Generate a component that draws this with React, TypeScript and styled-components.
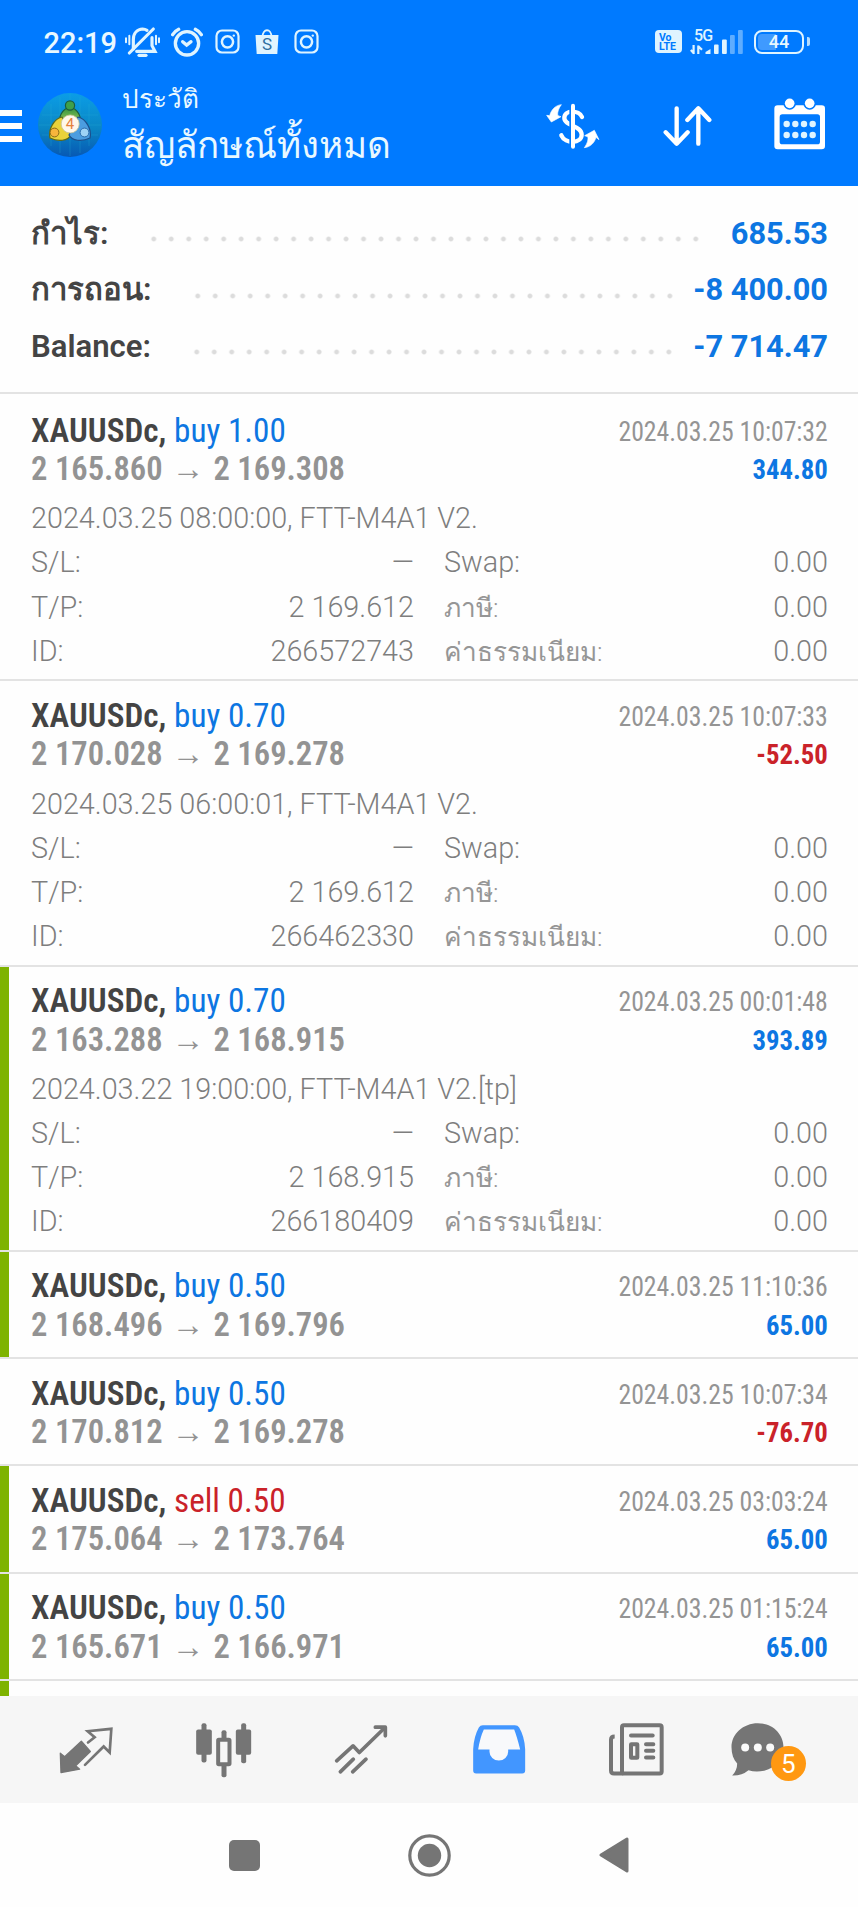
import React from 'react';
import styled, { createGlobalStyle } from 'styled-components';

const BLUE = '#007aff';
const VALUE_BLUE = '#0d76e2';
const VALUE_RED = '#ca2229';
const ICON_GREY = '#757575';
const ICE = '#dff4ff';

const GlobalStyle = createGlobalStyle`
  html, body { margin: 0; padding: 0; }
  body {
    background: #fefefe;
    font-family: Roboto, "Noto Sans", sans-serif;
    -webkit-font-smoothing: antialiased;
  }
  *, *::before, *::after { box-sizing: border-box; }
`;

const Screen = styled.div`
  width: 858px;
  height: 1907px;
  display: flex;
  flex-direction: column;
  overflow: hidden;
  background: #fefefe;
`;

/* ---------- header ---------- */

const Header = styled.header`
  flex: none;
  height: 185.5px;
  background: ${BLUE};
  color: #e9f8ff;
`;

const StatusBar = styled.div`
  height: 83px;
  padding: 0 54px 0 43.5px;
  display: flex;
  align-items: center;
`;

const Clock = styled.span`
  width: 80px;
  font-size: 29px;
  font-weight: 500;
  line-height: 34px;
  padding-top: 2px;
`;

const StatusGroup = styled.div<{ $push?: boolean; $gap: number }>`
  display: flex;
  align-items: center;
  gap: ${p => p.$gap}px;
  margin-left: ${p => (p.$push ? 'auto' : '0')};
`;

const AppIcons = styled.div`
  display: flex;
  align-items: center;
  gap: 15px;
  margin-left: 1.5px;
`;

const VoLte = styled.span`
  width: 27px;
  height: 23px;
  border-radius: 4px;
  background: ${ICE};
  color: ${BLUE};
  font-size: 10.5px;
  font-weight: 700;
  line-height: 9.5px;
  padding: 2.5px 0 0 4px;
`;

const Cell = styled.div`
  display: flex;
  flex-direction: column;
  width: 56px;
`;

const CellLabel = styled.span`
  font-size: 16px;
  font-weight: 500;
  line-height: 16px;
  height: 13px;
  padding-left: 4px;
  letter-spacing: -0.8px;
  color: ${ICE};
`;

const Battery = styled.div`
  position: relative;
  width: 50px;
  height: 24px;
  border: 2.5px solid ${ICE};
  border-radius: 8px;
  display: flex;
  align-items: center;
  justify-content: center;
  font-size: 18px;
  font-weight: 500;
  line-height: 18px;
  background: linear-gradient(90deg, #3f9aff 0 42%, transparent 42%) content-box;
  padding: 2px;

  &::after {
    content: '';
    position: absolute;
    right: -8px;
    top: 5.5px;
    width: 3px;
    height: 9px;
    border-radius: 0 2px 2px 0;
    background: #b4dcff;
  }
`;

const AppBar = styled.div`
  height: 102.5px;
  padding: 0 32px 17px 0;
  display: flex;
  align-items: center;
`;

const MenuBars = styled.div`
  width: 22px;
  height: 32px;
  display: flex;
  flex-direction: column;
  justify-content: space-between;
`;

const MenuBar = styled.span`
  height: 6px;
  background: #fff;
`;

const Logo = styled.svg`
  width: 66px;
  height: 66px;
  margin: -2px 0 0 15px;
`;

const Titles = styled.div`
  margin-left: 18.5px;
  display: flex;
  flex-direction: column;
`;

const Caption = styled.span`
  font-size: 26.1px;
  line-height: 36.5px;
  height: 39px;
  white-space: nowrap;
`;

const Title = styled.span`
  font-size: 36.7px;
  line-height: 51px;
  height: 50px;
  white-space: nowrap;
`;

const Actions = styled.div`
  margin-left: auto;
  display: flex;
  align-items: center;
  gap: 62.5px;
`;

/* ---------- summary ---------- */

const Summary = styled.section`
  flex: none;
  height: 208.5px;
  padding: 20.5px 30px 0 31px;
  border-bottom: 2px solid #e3e3e3;
`;

const SummaryRow = styled.div`
  height: 56.3px;
  display: flex;
  align-items: center;
  font-weight: 700;
  line-height: 56.3px;
  white-space: nowrap;
`;

const SummaryLabel = styled.span`
  color: #444;
  font-size: 31.1px;
  font-weight: 600;
`;

const Leader = styled.span<{ $count: number; $gap: number }>`
  width: ${p => p.$count * 17.49}px;
  height: 8px;
  margin: 10.5px ${p => p.$gap}px 0 auto;
  background: radial-gradient(circle, #dcdcdc 0 1.8px, transparent 3px) 0 0 / 17.49px 8px repeat-x;
`;

const SummaryValue = styled.span`
  color: ${VALUE_BLUE};
  font-size: 30.8px;
`;

/* ---------- deals ---------- */

const Deals = styled.section`
  flex: 1;
  padding-top: 2px;
  overflow: hidden;
`;

const Deal = styled.article<{ $open: boolean; $marked: boolean }>`
  height: ${p => (p.$open ? 283.3 : 105.25)}px;
  padding: 14.5px 30px 0 22px;
  border-left: 9px solid ${p => (p.$marked ? '#7eb300' : 'transparent')};
`;

const Divider = styled.div`
  height: 2px;
  background: #e3e3e3;
`;

const NextDealEdge = styled.div`
  width: 9px;
  height: 20px;
  background: #7eb300;
`;

const DealLine = styled.div`
  height: 38.5px;
  display: flex;
  justify-content: space-between;
  line-height: 38.5px;
  white-space: pre;
`;

const Narrow = styled.span<{ $scale: number; $size: number; $weight: number; $color: string; $end?: boolean }>`
  display: inline-block;
  font-family: "Roboto Condensed", Roboto, "Noto Sans", sans-serif;
  font-size: ${p => p.$size}px;
  font-weight: ${p => p.$weight};
  color: ${p => p.$color};
  transform: scaleX(${p => p.$scale});
  transform-origin: ${p => (p.$end ? '100%' : '0')} 50%;
  ${p => (p.$end ? 'padding-top: 2px;' : '')}
`;

const Side = styled.span<{ $sell: boolean }>`
  font-weight: 400;
  color: ${p => (p.$sell ? VALUE_RED : VALUE_BLUE)};
`;

const Arrow = styled.span`
  display: inline-block;
  width: 53px;
  text-align: center;
  font-weight: 400;
`;

const Detail = styled.div`
  color: #7e7e7e;
  font-size: 28.75px;
  font-weight: 300;
  line-height: 44.1px;
  white-space: nowrap;
`;

const Comment = styled.div`
  height: 44.1px;
  margin-top: 8.9px;
`;

const Fields = styled.div`
  display: grid;
  grid-template-columns: 383px 384px;
  grid-auto-rows: 44.1px;
  column-gap: 30px;
`;

const Field = styled.div`
  display: flex;
  justify-content: space-between;
  align-items: baseline;
`;

const FieldLabel = styled.span<{ $thai: boolean }>`
  font-size: ${p => (p.$thai ? '26.2px' : 'inherit')};
  color: ${p => (p.$thai ? '#969696' : 'inherit')};
`;

/* ---------- bottom bars ---------- */

const TabBar = styled.nav`
  flex: none;
  height: 107px;
  padding: 0 15.75px 0 17.25px;
  display: flex;
  align-items: center;
  background: #f6f6f6;
`;

const Tab = styled.div`
  position: relative;
  flex: 1;
  display: flex;
  justify-content: center;
`;

const TabSvg = styled.svg`
  width: 60px;
  height: 60px;
  overflow: visible;
`;

const Badge = styled.span`
  position: absolute;
  left: 66px;
  top: 26.5px;
  width: 35px;
  height: 35px;
  border-radius: 50%;
  background: #ff9811;
  color: #fff;
  font-size: 26px;
  line-height: 36px;
  text-align: center;
`;

const SystemNav = styled.nav`
  flex: none;
  height: 104px;
  display: flex;
  justify-content: center;
  align-items: center;
`;

const NavCell = styled.div`
  width: 185px;
  display: flex;
  justify-content: center;
`;

/* ---------- drawings ---------- */

const BellOff = () => (
  <svg width="36" height="34" viewBox="372 74 108 102" fill="none" stroke={ICE} strokeWidth="9.5" strokeLinecap="round">
    <path d="M400 146 V118 C400 98 412 87 428 86 C434 86 438 88 441 90" />
    <path d="M456 112 V136 L465 153 H410" />
    <path d="M460 86 L388 158" />
    <path d="M417 165 H438" />
    <path d="M378 114 V126 M388 106 V132 M468 106 V132 M477 114 V126" strokeWidth="6" />
  </svg>
);

const Alarm = () => (
  <svg width="32" height="30" viewBox="514 78 96 90" fill="none" stroke={ICE} strokeWidth="10" strokeLinecap="round">
    <circle cx="562" cy="127" r="35" />
    <path d="M519 101 Q526 90 537 85 M605 101 Q598 90 587 85" />
    <path d="M549 122 L561 132 L574 122" />
  </svg>
);

const Insta = () => (
  <svg width="25" height="25" viewBox="0 0 25 25" fill="none" stroke={ICE} strokeWidth="2.2">
    <rect x="1.5" y="1.5" width="22" height="22" rx="5.5" />
    <circle cx="12.5" cy="12.8" r="5.6" strokeWidth="2.5" />
    <circle cx="18.8" cy="6.6" r="1.2" fill={ICE} stroke="none" />
  </svg>
);

const ShopBag = () => (
  <svg width="24" height="27" viewBox="0 0 24 27">
    <path d="M7.5 9 C7.5 0 16.5 0 16.5 9" fill="none" stroke={ICE} strokeWidth="1.8" />
    <path d="M0.5 7 H23.5 L22.3 26 H1.7 Z" fill={ICE} />
    <text x="12" y="22.3" fontFamily="Roboto" fontSize="17" textAnchor="middle" fill="#2f6f9f">S</text>
  </svg>
);

const SignalBars = () => (
  <svg width="54" height="26" viewBox="0 0 54 26">
    <g fill="none" stroke={ICE} strokeWidth="2.2">
      <path d="M3.6 16 V25 M0.8 21 L4 24.6" />
      <path d="M8.3 25 V16.6 M8 17 L12 20.8" />
    </g>
    <g fill={ICE}>
      <path d="M15.5 25 V23 L20.5 20 V25 Z" />
      <rect x="24" y="15.5" width="4.6" height="9.5" rx="1" />
      <rect x="32" y="10.5" width="4.8" height="14.5" rx="1" />
      <g opacity=".42">
        <rect x="40" y="6" width="4.8" height="19" rx="1" />
        <rect x="48" y="1" width="4.8" height="24" rx="1" />
      </g>
    </g>
  </svg>
);

const SignalWrap = styled.div`
  margin-top: -12px;
  height: 26px;
`;

const LogoMark = () => (
  <Logo viewBox="0 0 66 66">
    <defs>
      <linearGradient id="disc" x1="0" y1="0" x2="0" y2="1">
        <stop offset="0" stopColor="#0b9de6" />
        <stop offset=".55" stopColor="#0a86c4" />
        <stop offset="1" stopColor="#0758b4" />
      </linearGradient>
      <linearGradient id="leaf" x1="0" y1="0" x2="0" y2="1">
        <stop offset="0" stopColor="#2f8f3f" />
        <stop offset="1" stopColor="#a7d35c" />
      </linearGradient>
    </defs>
    <circle cx="33" cy="33" r="32" fill="url(#disc)" />
    <path d="M14 12 V54 M23 5 V61 M33 2 V64 M43 5 V61 M52 12 V54 M5 23 H61 M2 33 H64 M5 43 H61" stroke="#28b5d8" strokeWidth=".6" opacity=".45" />
    <g strokeLinejoin="round">
      <path d="M33 15 C25 17 21 25 23 33 L43 33 C45 25 41 17 33 15Z" fill="url(#leaf)" stroke="#1d5c3c" strokeWidth="1.2" />
      <circle cx="33" cy="13.5" r="4.6" fill="#3fa04a" stroke="#1d5c3c" strokeWidth="1.2" />
      <path d="M25 25 C17 27 11 37 13 46 C21 50 31 49 34 43 Z" fill="#ead23a" stroke="#5f6a16" strokeWidth="1.2" />
      <circle cx="17.5" cy="40.5" r="4.4" fill="#f7b53c" stroke="#8a6a16" strokeWidth="1" />
      <path d="M41 25 C49 27 55 37 53 46 C45 50 35 49 32 43 Z" fill="#4b9de0" stroke="#1c4f8c" strokeWidth="1.2" />
      <circle cx="47.5" cy="40.5" r="4.4" fill="#9ed3f6" stroke="#2b6cab" strokeWidth="1" />
    </g>
    <circle cx="33.2" cy="32" r="9" fill="#fff7ea" stroke="#c9c79a" strokeWidth=".8" />
    <text x="33" y="37.4" fontFamily="Roboto" fontSize="15" textAnchor="middle" fill="#e5813c">4</text>
  </Logo>
);

const DollarCycle = () => (
  <svg width="54" height="46" viewBox="356 305 162 138" fill="none">
    <path d="M464 347 C456 326 411 324 411 350 C411 374 463 372 463 400 C463 426 414 430 402 402" stroke="#fff" strokeWidth="13" strokeLinecap="round" />
    <path d="M430 308 V440" stroke={BLUE} strokeWidth="8" />
    <path d="M437 313 V436" stroke="#fff" strokeWidth="12" strokeLinecap="round" />
    <path d="M402 310 C393 322 389 336 392 343 L401 346 L372 362 L358 342 L367 343 C372 325 384 312 402 310Z" fill="#fff" stroke="#fff" strokeWidth="2" />
    <path d="M471 439 C480 427 484 413 481 406 L472 403 L501 387 L515 415 L506 408 C501 425 489 437 471 439Z" fill="#fff" stroke="#fff" strokeWidth="2" />
  </svg>
);

const SortArrows = () => (
  <svg width="49" height="42" viewBox="704 311 147 126" fill="none" stroke="#fff" strokeWidth="13" strokeLinecap="round" strokeLinejoin="round">
    <path d="M745 321 V426 M712 393 L745 427 L778 393" />
    <path d="M810 427 V324 M777 356 L810 321 L843 356" />
  </svg>
);

const CalendarSvg = styled.svg`
  margin-top: -3px;
`;

const Calendar = () => (
  <CalendarSvg width="52" height="52" viewBox="1038 293 156 156">
    <rect x="1039" y="315" width="152" height="132" rx="10" fill="#fff" />
    <rect x="1055" y="342" width="121" height="90" rx="8" fill={BLUE} />
    <circle cx="1085" cy="309" r="19" fill={BLUE} />
    <circle cx="1145" cy="309" r="19" fill={BLUE} />
    <circle cx="1085" cy="309" r="14.5" fill="#fff" />
    <circle cx="1145" cy="309" r="14.5" fill="#fff" />
    {[371, 404].map(y => [1076, 1102, 1128, 1154].map(x => (
      <circle key={`${x}-${y}`} cx={x} cy={y} r="9.6" fill={ICE} />
    )))}
  </CalendarSvg>
);

const QuotesIcon = () => (
  <TabSvg viewBox="168 88.5 180 180" fill="none" stroke={ICON_GREY}>
    <path d="M244 152 L271 183 L227 226 L239 236 L183 246 L181 188 L194 199 Z" fill={ICON_GREY} strokeWidth="4" strokeLinejoin="round" />
    <path d="M264 156 L284 140 L263 122 L334 115 L329 186 L311 168 L255 223" strokeWidth="8" strokeLinecap="round" />
  </TabSvg>
);

const CandlesIcon = () => (
  <TabSvg viewBox="580.5 88.5 180 180" fill={ICON_GREY}>
    <rect x="603" y="98" width="15" height="118" rx="6" />
    <rect x="587" y="117" width="47" height="76" rx="6" />
    <rect x="722" y="98" width="15" height="120" rx="6" />
    <rect x="706" y="117" width="46" height="76" rx="6" />
    <rect x="663" y="119" width="15" height="30" rx="6" />
    <rect x="663" y="220" width="15" height="40" rx="6" />
    <rect x="653" y="148" width="34" height="73" rx="2" fill="none" stroke={ICON_GREY} strokeWidth="12" />
  </TabSvg>
);

const TrendIcon = () => (
  <TabSvg viewBox="993 88.5 180 180" fill="none" stroke={ICON_GREY} strokeWidth="11" strokeLinecap="round" strokeLinejoin="round">
    <path d="M1010 211 L1059 166 L1078 186 L1152 114" />
    <path d="M1126 110 H1156 V136" />
    <path d="M1021 244 L1060 206 M1058 244 L1098 206" />
  </TabSvg>
);

const InboxIcon = () => (
  <TabSvg viewBox="121.5 88.5 180 180">
    <path d="M163 104 H259 Q268 104 272 111 Q288 138 290 176 V240 Q290 249 281 249 H143 Q134 249 134 240 V176 Q136 138 151 111 Q155 104 163 104 Z" fill="#4296ff" />
    <path d="M166 117 H257 Q265 137 275 177 H239 V184 A28 26 0 0 1 183 184 V177 H149 Q155 140 166 117 Z" fill="#f8f9fb" />
  </TabSvg>
);

const NewsIcon = () => (
  <TabSvg viewBox="534 88.5 180 180" fill="none" stroke={ICON_GREY} strokeWidth="12" strokeLinecap="round">
    <rect x="582" y="104" width="119" height="145" rx="6" />
    <path d="M560 138 Q549 138 549 148 V240 Q549 249 558 249 H586" strokeLinecap="butt" />
    <path d="M609 135 H674" />
    <rect x="609" y="161" width="19" height="41" rx="1" />
    <path d="M654 161 H676 M654 181 H676 M654 201 H676" />
  </TabSvg>
);

const ChatIcon = () => (
  <TabSvg viewBox="946.5 88.5 180 180">
    <path d="M988 98 C1032 98 1065 130 1065 170 C1065 212 1030 243 985 243 Q972 243 960 239 Q940 256 911 255 Q926 240 926 219 C915 207 909 190 909 170 C909 130 944 98 988 98 Z" fill={ICON_GREY} />
    <circle cx="950" cy="171" r="12" fill="#fafafa" />
    <circle cx="988" cy="171" r="12" fill="#fafafa" />
    <circle cx="1025" cy="171" r="12" fill="#fafafa" />
  </TabSvg>
);

/* ---------- data ---------- */

const summary = [
  { label: 'กำไร:', value: '685.53', dots: 32, gap: 26 },
  { label: 'การถอน:', value: '-8 400.00', dots: 28, gap: 15 },
  { label: 'Balance:', value: '-7 714.47', dots: 28, gap: 15.5 },
];

type DealData = {
  side: string; from: string; to: string; time: string; profit: string;
  marked?: boolean; comment?: string; tp?: string; id?: string;
};

const deals: DealData[] = [
  { side: 'buy 1.00', from: '2 165.860', to: '2 169.308', time: '2024.03.25 10:07:32', profit: '344.80', comment: '2024.03.25 08:00:00, FTT-M4A1 V2.', tp: '2 169.612', id: '266572743' },
  { side: 'buy 0.70', from: '2 170.028', to: '2 169.278', time: '2024.03.25 10:07:33', profit: '-52.50', comment: '2024.03.25 06:00:01, FTT-M4A1 V2.', tp: '2 169.612', id: '266462330' },
  { side: 'buy 0.70', from: '2 163.288', to: '2 168.915', time: '2024.03.25 00:01:48', profit: '393.89', marked: true, comment: '2024.03.22 19:00:00, FTT-M4A1 V2.[tp]', tp: '2 168.915', id: '266180409' },
  { side: 'buy 0.50', from: '2 168.496', to: '2 169.796', time: '2024.03.25 11:10:36', profit: '65.00', marked: true },
  { side: 'buy 0.50', from: '2 170.812', to: '2 169.278', time: '2024.03.25 10:07:34', profit: '-76.70' },
  { side: 'sell 0.50', from: '2 175.064', to: '2 173.764', time: '2024.03.25 03:03:24', profit: '65.00', marked: true },
  { side: 'buy 0.50', from: '2 165.671', to: '2 166.971', time: '2024.03.25 01:15:24', profit: '65.00', marked: true },
];

const DealRow = ({ deal }: { deal: DealData }) => {
  const fields: [string, string, boolean][] = [
    ['S/L:', '—', false], ['Swap:', '0.00', false],
    ['T/P:', deal.tp ?? '', false], ['ภาษี:', '0.00', true],
    ['ID:', deal.id ?? '', false], ['ค่าธรรมเนียม:', '0.00', true],
  ];
  return (
    <>
      <Deal $open={!!deal.comment} $marked={!!deal.marked}>
        <DealLine>
          <Narrow $scale={0.977} $size={34} $weight={600} $color="#444">
            XAUUSDc, <Side $sell={deal.side.startsWith('sell')}>{deal.side}</Side>
          </Narrow>
          <Narrow $scale={0.919} $size={28} $weight={400} $color="#949494" $end>{deal.time}</Narrow>
        </DealLine>
        <DealLine>
          <Narrow $scale={0.959} $size={34} $weight={600} $color="#939393">
            {deal.from}<Arrow>→</Arrow>{deal.to}
          </Narrow>
          <Narrow $scale={0.955} $size={28} $weight={700} $color={deal.profit.startsWith('-') ? VALUE_RED : VALUE_BLUE} $end>
            {deal.profit}
          </Narrow>
        </DealLine>
        {deal.comment && (
          <Detail>
            <Comment>{deal.comment}</Comment>
            <Fields>
              {fields.map(([label, value, thai]) => (
                <Field key={label}>
                  <FieldLabel $thai={thai}>{label}</FieldLabel>
                  <span>{value}</span>
                </Field>
              ))}
            </Fields>
          </Detail>
        )}
      </Deal>
      <Divider />
    </>
  );
};

export default function App() {
  return (
    <Screen>
      <GlobalStyle />
      <Header>
        <StatusBar>
          <Clock>22:19</Clock>
          <StatusGroup $gap={11}>
            <BellOff />
            <Alarm />
            <AppIcons>
              <Insta />
              <ShopBag />
              <Insta />
            </AppIcons>
          </StatusGroup>
          <StatusGroup $push $gap={8}>
            <VoLte>Vo<br />LTE</VoLte>
            <Cell>
              <CellLabel>5G</CellLabel>
              <SignalWrap><SignalBars /></SignalWrap>
            </Cell>
            <Battery>44</Battery>
          </StatusGroup>
        </StatusBar>
        <AppBar>
          <MenuBars><MenuBar /><MenuBar /><MenuBar /></MenuBars>
          <LogoMark />
          <Titles>
            <Caption>ประวัติ</Caption>
            <Title>สัญลักษณ์ทั้งหมด</Title>
          </Titles>
          <Actions>
            <DollarCycle />
            <SortArrows />
            <Calendar />
          </Actions>
        </AppBar>
      </Header>

      <Summary>
        {summary.map(s => (
          <SummaryRow key={s.label}>
            <SummaryLabel>{s.label}</SummaryLabel>
            <Leader $count={s.dots} $gap={s.gap} />
            <SummaryValue>{s.value}</SummaryValue>
          </SummaryRow>
        ))}
      </Summary>

      <Deals>
        {deals.map(d => <DealRow key={d.time} deal={d} />)}
        <NextDealEdge />
      </Deals>

      <TabBar>
        <Tab><QuotesIcon /></Tab>
        <Tab><CandlesIcon /></Tab>
        <Tab><TrendIcon /></Tab>
        <Tab><InboxIcon /></Tab>
        <Tab><NewsIcon /></Tab>
        <Tab><ChatIcon /><Badge>5</Badge></Tab>
      </TabBar>

      <SystemNav>
        <NavCell>
          <svg width="31" height="31"><rect width="31" height="31" rx="5" fill={ICON_GREY} /></svg>
        </NavCell>
        <NavCell>
          <svg width="43" height="43" viewBox="0 0 43 43">
            <circle cx="21.5" cy="21.5" r="19.7" fill="none" stroke={ICON_GREY} strokeWidth="3.2" />
            <circle cx="21.5" cy="21.5" r="11.7" fill={ICON_GREY} />
          </svg>
        </NavCell>
        <NavCell>
          <svg width="30" height="36" viewBox="0 0 30 36">
            <path d="M28 2 V34 L2 18 Z" fill={ICON_GREY} stroke={ICON_GREY} strokeWidth="3" strokeLinejoin="round" />
          </svg>
        </NavCell>
      </SystemNav>
    </Screen>
  );
}
